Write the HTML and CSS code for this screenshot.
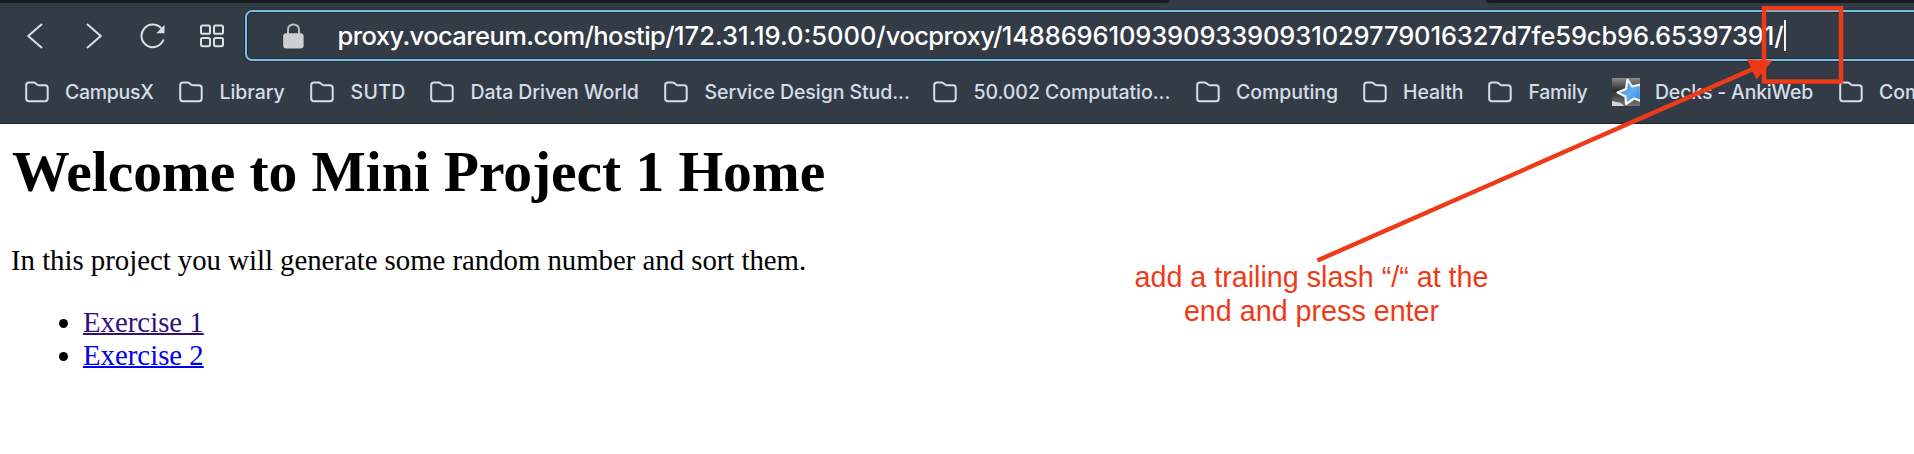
FILE: index.html
```html
<!DOCTYPE html>
<html lang="en">
<head>
<meta charset="utf-8">
<title>Mini Project 1</title>
<link rel="stylesheet" href="styles.css">
</head>
<body>
<svg class="defs" aria-hidden="true">
  <symbol id="folder" viewBox="0 0 24 22">
    <path d="M1.2 17.6V4.2Q1.2 1.5 3.9 1.5H8.4Q9.6 1.5 10.5 2.2L12.3 3.7Q13 4.2 14 4.2H20Q22.7 4.2 22.7 6.9V17.6Q22.7 20.2 20.1 20.2H3.8Q1.2 20.2 1.2 17.6Z" fill="none" stroke="#d5dde8" stroke-width="2"/>
  </symbol>
</svg>
<header class="browser">
  <div class="tabs"><div class="tabs-left"></div><div class="tab-active"></div><div class="tabs-right"></div></div>
  <div class="toolbar">
    <nav class="controls">
      <svg class="ctl" width="16" height="26" viewBox="0 0 16 26"><path d="M15 1L1.2 13L15 25"/></svg>
      <svg class="ctl forward" width="16" height="26" viewBox="0 0 16 26"><path d="M1 1L14.8 13L1 25"/></svg>
      <svg class="ctl reload" width="26" height="26" viewBox="0 0 26 26"><path d="M23.5 16.5A11.3 11.3 0 1 1 21.3 5.4"/><path class="solid" d="M24.5 2V10.3H16.3Z"/></svg>
      <svg class="ctl speed" width="24" height="24" viewBox="0 0 24 24"><rect x="1" y="1.5" width="9" height="8.3" rx="1.6"/><rect x="14" y="1.5" width="9" height="8.3" rx="1.6"/><rect x="1" y="13.9" width="9" height="8.3" rx="1.6"/><rect x="14" y="13.9" width="9" height="8.3" rx="1.6"/></svg>
    </nav>
    <div class="address">
      <svg class="lock" width="21" height="26" viewBox="0 0 21 26"><path d="M5 12V7Q5 1.5 10.5 1.5T16 7V12" fill="none" stroke="#b9bdc2" stroke-width="2"/><rect x="0.2" y="10.3" width="20.4" height="15.2" rx="3" fill="#cdd0d3"/></svg>
      <div class="url"><span class="host">proxy.vocareum.com/hostip/</span><span>172.31.19.0:5000/</span><span class="host">vocproxy/</span><span class="session">148869610939093390931029779016327d7fe59cb96.65397391/</span></div>
      <div class="caret"></div>
    </div>
  </div>
  <div class="bookmarks">
    <div class="bm"><svg class="folder"><use href="#folder"/></svg><span class="tight">CampusX</span></div>
    <div class="bm"><svg class="folder"><use href="#folder"/></svg><span>Library</span></div>
    <div class="bm"><svg class="folder"><use href="#folder"/></svg><span class="loose">SUTD</span></div>
    <div class="bm"><svg class="folder"><use href="#folder"/></svg><span>Data Driven World</span></div>
    <div class="bm"><svg class="folder"><use href="#folder"/></svg><span>Service Design Stud...</span></div>
    <div class="bm"><svg class="folder"><use href="#folder"/></svg><span>50.002 Computatio...</span></div>
    <div class="bm"><svg class="folder"><use href="#folder"/></svg><span>Computing</span></div>
    <div class="bm"><svg class="folder"><use href="#folder"/></svg><span>Health</span></div>
    <div class="bm"><svg class="folder"><use href="#folder"/></svg><span class="tight">Family</span></div>
    <div class="bm anki">
      <svg width="28" height="28" viewBox="0 0 28 28">
        <defs>
          <linearGradient id="gray" x1="0" y1="0" x2="0" y2="1"><stop offset="0" stop-color="#8b8b8b"/><stop offset=".45" stop-color="#2e2e2e"/><stop offset="1" stop-color="#777"/></linearGradient>
          <linearGradient id="blue" x1="0" y1="0" x2="1" y2="1"><stop offset="0" stop-color="#2f86d6"/><stop offset=".55" stop-color="#62aef0"/><stop offset="1" stop-color="#2b7fd0"/></linearGradient>
        </defs>
        <rect width="28" height="28" fill="url(#gray)"/>
        <path d="M0 28V23L9 25L12 28Z" fill="#d5d5d5"/>
        <path d="M15.5 1.5L20 8.5L29 6.5V23L22 20.5L14 26L13.5 18.5L5.5 14.5L14 11Z" fill="url(#blue)" stroke="#f4f6f8" stroke-width="2.2" stroke-linejoin="round"/>
      </svg><span>Decks - AnkiWeb</span></div>
    <div class="bm"><svg class="folder"><use href="#folder"/></svg><span>Com</span></div>
  </div>
</header>
<main class="page">
  <h1>Welcome to Mini Project 1 Home</h1>
  <p>In this project you will generate some random number and sort them.</p>
  <ul>
    <li><a class="visited" href="#">Exercise 1</a></li>
    <li><a href="#">Exercise 2</a></li>
  </ul>
</main>
<svg class="marks" width="1914" height="454" viewBox="0 0 1914 454">
  <rect x="1764" y="8.2" width="77" height="73.3" fill="none" stroke="#f03a17" stroke-width="4.4"/>
  <path d="M1317.5 260.5L1754 68.5" stroke="#f03a17" stroke-width="4.4"/>
  <path d="M1747 59.3L1772.5 60.5L1756.5 79.5Z" fill="#f03a17"/>
</svg>
<div class="note">add a trailing slash “/“ at the<br>end and press enter</div>
</body>
</html>
```
FILE: styles.css
```css
* { box-sizing: border-box; }

body {
  margin: 0;
  width: 1914px;
  height: 454px;
  overflow: hidden;
  position: relative;
  background: #fff;
  color: #000;
  font-family: "Liberation Serif", serif;
}

.defs { position: absolute; width: 0; height: 0; }

.browser {
  height: 124px;
  overflow: hidden;
  background: #333c46;
  border-bottom: 1px solid #1a222b;
  font-family: Inter, sans-serif;
  font-weight: 500;
}

.tabs { display: flex; height: 3px; }
.tabs-left { width: 1169px; background: #181b1e; border-bottom-right-radius: 3px; }
.tab-active { width: 317px; }
.tabs-right { flex: 1; background: #181b1e; border-bottom-left-radius: 3px; }

.toolbar { display: flex; height: 59px; padding-top: 7px; }
.controls {
  display: flex;
  align-items: center;
  flex: none;
  width: 244.5px;
  padding: 0 0 1px 26.5px;
}
.ctl { flex: none; fill: none; stroke: #d9e0e8; stroke-width: 2; }
.forward { margin-left: 43px; }
.reload { margin-left: 38.5px; }
.speed { margin-left: 33.5px; }
.solid { fill: #d9e0e8; stroke: none; }

.address {
  display: flex;
  align-items: center;
  flex: none;
  width: 1700px;
  height: 51px;
  padding: 0 0 0 36px;
  border: 2px solid #79c0e6;
  border-radius: 7px;
  box-shadow: 0 0 0 1px #252a33, inset 0 0 0 1px #252a33;
}
.lock { flex: none; }
.url {
  margin-left: 34px;
  font-size: 25.5px;
  line-height: 46px;
  color: #fff;
  white-space: nowrap;
}
.host { letter-spacing: -0.58px; }
.session { letter-spacing: -0.12px; }
.caret { width: 2px; height: 31px; background: #f2f2f2; }

.bookmarks {
  display: grid;
  grid-template-columns: 154.5px 131px 120px 234px 269px 262.5px 167px 125.5px 124px 226.5px 160px;
  height: 61px;
  padding: 0 0 2px 24.5px;
}
.bm {
  display: flex;
  align-items: center;
  font-size: 19.5px;
  letter-spacing: -0.06px;
  color: #d5dde8;
  white-space: nowrap;
}
.folder { flex: none; width: 24px; height: 22px; margin-right: 16.5px; }
.tight { letter-spacing: -0.3px; }
.loose { letter-spacing: 0.3px; }
.anki { letter-spacing: -0.2px; }
.anki svg { flex: none; margin-right: 15px; }

.page { padding: 15px 11px 0; font-size: 28.8px; line-height: 33.3px; }
.page h1 {
  margin: 0 0 0 1px;
  font-size: 57.6px;
  line-height: 66px;
  letter-spacing: -0.1px;
}
.page p { margin: 38.5px 0 0; letter-spacing: -0.02px; }
.page ul { margin: 29px 0 0; padding-left: 72px; }
.page a { color: #0000ee; text-decoration-thickness: 2px; }
.page .visited { color: #32107a; }

.marks { position: absolute; left: 0; top: 0; }
.note {
  position: absolute;
  left: 1111.5px;
  top: 260px;
  width: 400px;
  font: 28.7px/34px "Liberation Sans", sans-serif;
  color: #f03a17;
  text-align: center;
}
```
